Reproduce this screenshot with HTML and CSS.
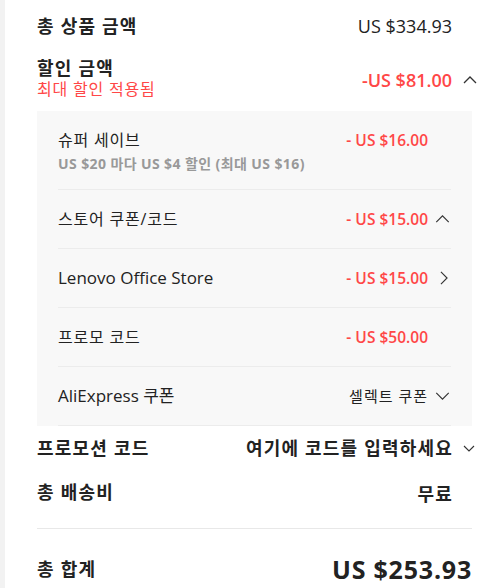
FILE: index.html
```html
<!DOCTYPE html>
<html lang="ko">
<head>
<meta charset="UTF-8" />
<meta name="viewport" content="width=device-width,initial-scale=1" />
<title>주문 요약</title>
<link rel="stylesheet" href="styles.css">
</head>
<body>
<div class="page">
    <div class="row row-first">
        <div class="label">총 상품 금액</div>
        <div class="right">
            <span class="value">US $334.93</span>
            <span class="slot"></span>
        </div>
    </div>

    <div class="row row-discount">
        <div>
            <div class="label">할인 금액</div>
            <div class="note">최대 할인 적용됨</div>
        </div>
        <div class="right">
            <span class="value red strong">-US $81.00</span>
            <span class="slot">
                <svg class="chev-up-sm" viewBox="0 0 14 8"><polyline points="1,7 7,1 13,7"/></svg>
            </span>
        </div>
    </div>

    <!-- 할인 상세 -->
    <div class="panel">
        <div class="item item-tall">
            <div>
                <div class="item-title">슈퍼 세이브</div>
                <div class="item-sub">US $20 마다 US $4 할인 (최대 US $16)</div>
            </div>
            <div class="item-right">
                <span class="item-value red">- US $16.00</span>
                <span class="item-slot"></span>
            </div>
        </div>
        <div class="item">
            <div class="item-title">스토어 쿠폰/코드</div>
            <div class="item-right">
                <span class="item-value red">- US $15.00</span>
                <span class="item-slot">
                    <svg class="chev-up" viewBox="0 0 16 9"><polyline points="1,8 8,1 15,8"/></svg>
                </span>
            </div>
        </div>
        <div class="item">
            <div class="item-title latin">Lenovo Office Store</div>
            <div class="item-right">
                <span class="item-value red">- US $15.00</span>
                <span class="item-slot">
                    <svg class="chev-right" viewBox="0 0 9 16"><polyline points="1,1 8,8 1,15"/></svg>
                </span>
            </div>
        </div>
        <div class="item">
            <div class="item-title">프로모 코드</div>
            <div class="item-right">
                <span class="item-value red">- US $50.00</span>
                <span class="item-slot"></span>
            </div>
        </div>
        <div class="item">
            <div class="item-title latin">AliExpress 쿠폰</div>
            <div class="item-right">
                <span class="item-value dark">셀렉트 쿠폰</span>
                <span class="item-slot">
                    <svg class="chev-down" viewBox="0 0 16 9"><polyline points="1,1 8,8 15,1"/></svg>
                </span>
            </div>
        </div>
    </div>

    <div class="row row-promo">
        <div class="label">프로모션 코드</div>
        <div class="right">
            <span class="value ko">여기에 코드를 입력하세요</span>
            <span class="slot">
                <svg class="chev-down-sm" viewBox="0 0 12 7"><polyline points="1,1 6,6 11,1"/></svg>
            </span>
        </div>
    </div>

    <div class="row row-ship">
        <div class="label">총 배송비</div>
        <div class="right">
            <span class="value ko">무료</span>
            <span class="slot"></span>
        </div>
    </div>

    <div class="row row-total">
        <div class="label">총 합계</div>
        <div class="total">US $253.93</div>
    </div>
</div>
</body>
</html>
```

FILE: styles.css
```css
*{margin:0;padding:0;box-sizing:border-box}
body{
    background:#fff;
    font-family:"Open Sans","Noto Sans CJK KR",sans-serif;
    color:#222;
}
.page{
    min-height:100vh;
    border-left:5px solid #f2f2f2;
    padding:0 27px 0 32px;
}
.row{
    display:flex;
    justify-content:space-between;
    align-items:center;
}
.label{
    font-size:18px;
    line-height:22px;
    font-weight:700;
    letter-spacing:1.2px;
}
.right{
    display:flex;
    align-items:center;
}
.value{
    font-size:18px;
    line-height:26px;
}
.value.strong{font-weight:600}
.value.ko{
    font-weight:700;
    letter-spacing:1.2px;
    margin-right:-1px;
}
.slot{
    width:20px;
    display:flex;
    align-items:center;
}
.red{color:#ff4747}
svg{
    display:block;
    fill:none;
    stroke:#333;
    stroke-width:1.3;
    overflow:visible;
}
.chev-up-sm{width:14px;height:8px;margin-left:11px}
.chev-down-sm{width:12px;height:7px;margin-left:11px;stroke-width:1.1}

.row-first{height:52px}
.row-discount{
    padding-top:5px;
    align-items:flex-end;
}
.row-discount .right{padding-bottom:6px}
.note{
    font-size:16px;
    line-height:20px;
    color:#ff4747;
    letter-spacing:0.8px;
}

/* 할인 상세 패널 */
.panel{
    margin-top:12px;
    background:#f8f8f8;
    padding:0 21px;
}
.item{
    display:flex;
    justify-content:space-between;
    align-items:center;
    padding:18px 0;
    border-bottom:1px solid #ececec;
}
.item-tall{padding:18px 0 15px}
.item-tall .item-right{align-self:flex-start}
.item-title{
    font-size:16px;
    line-height:22px;
    letter-spacing:0.8px;
}
.item-title.latin{font-size:17px;letter-spacing:0}
.item-sub{
    margin-top:3px;
    font-size:14px;
    line-height:20px;
    font-weight:700;
    color:#999;
    letter-spacing:0.4px;
}
.item-right{
    display:flex;
    align-items:center;
}
.item-value{
    font-size:15.5px;
    line-height:22px;
    font-weight:600;
}
.item-value.dark{
    font-size:15px;
    font-weight:400;
    color:#222;
    letter-spacing:1px;
}
.item-slot{
    width:23px;
    display:flex;
    align-items:center;
}
.chev-up{width:15px;height:8px;margin-left:7px}
.chev-down{width:15px;height:8px;margin-left:7px}
.chev-right{width:8px;height:14px;margin-left:12px}

.row-promo{height:44px}
.row-ship{
    height:46px;
    margin-bottom:12px;
    align-items:flex-start;
    padding-top:11px;
}
.row-total{
    border-top:1px solid #e8e8e8;
    padding-top:25px;
}
.total{
    font-size:25px;
    line-height:30px;
    font-weight:700;
    letter-spacing:0.8px;
}
```
